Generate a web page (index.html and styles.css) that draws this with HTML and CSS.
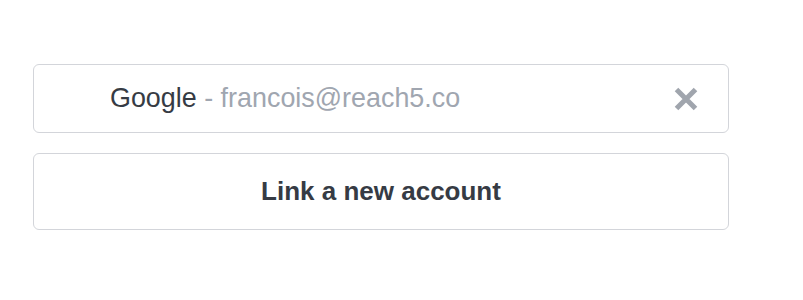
FILE: index.html
```html
<!DOCTYPE html>
<html lang="en">
<head>
<meta charset="utf-8">
<title>Linked accounts</title>
<link rel="stylesheet" href="styles.css">
</head>
<body>
<div class="accounts">
  <div class="account">
    <span class="account-label"><span class="provider">Google</span><span class="email"> - francois@reach5.co</span></span>
    <button class="unlink" aria-label="Unlink">
      <svg width="24" height="24" viewBox="0 0 24 24"><path d="M2.5 2.5 L21.5 21.5 M21.5 2.5 L2.5 21.5" stroke="#a0a5ad" stroke-width="5" fill="none"/></svg>
    </button>
  </div>
  <button class="link-new">Link a new account</button>
</div>
</body>
</html>
```
FILE: styles.css
```css
html, body {
  margin: 0;
  padding: 0;
  background: #ffffff;
}
body {
  font-family: "Liberation Sans", Arial, sans-serif;
  color: #363b44;
}
.accounts {
  display: flex;
  flex-direction: column;
  gap: 20px;
  width: 696px;
  margin: 64px 0 0 33px;
}
.account {
  box-sizing: border-box;
  height: 69px;
  border: 1px solid #d3d5da;
  border-radius: 6px;
  display: flex;
  align-items: center;
  padding: 0 30px 0 76px;
}
.account-label {
  flex: 1;
  font-size: 26.9px;
  white-space: nowrap;
}
.provider {
  color: #363b44;
}
.email {
  color: #a0a6b0;
}
.unlink {
  border: 0;
  background: none;
  padding: 0;
  width: 24px;
  height: 24px;
  display: flex;
}
.link-new {
  box-sizing: border-box;
  height: 77px;
  border: 1px solid #d3d5da;
  border-radius: 6px;
  background: #ffffff;
  font-family: "Liberation Sans", Arial, sans-serif;
  font-weight: 700;
  font-size: 26px;
  color: #363b44;
  padding: 0;
}
```
